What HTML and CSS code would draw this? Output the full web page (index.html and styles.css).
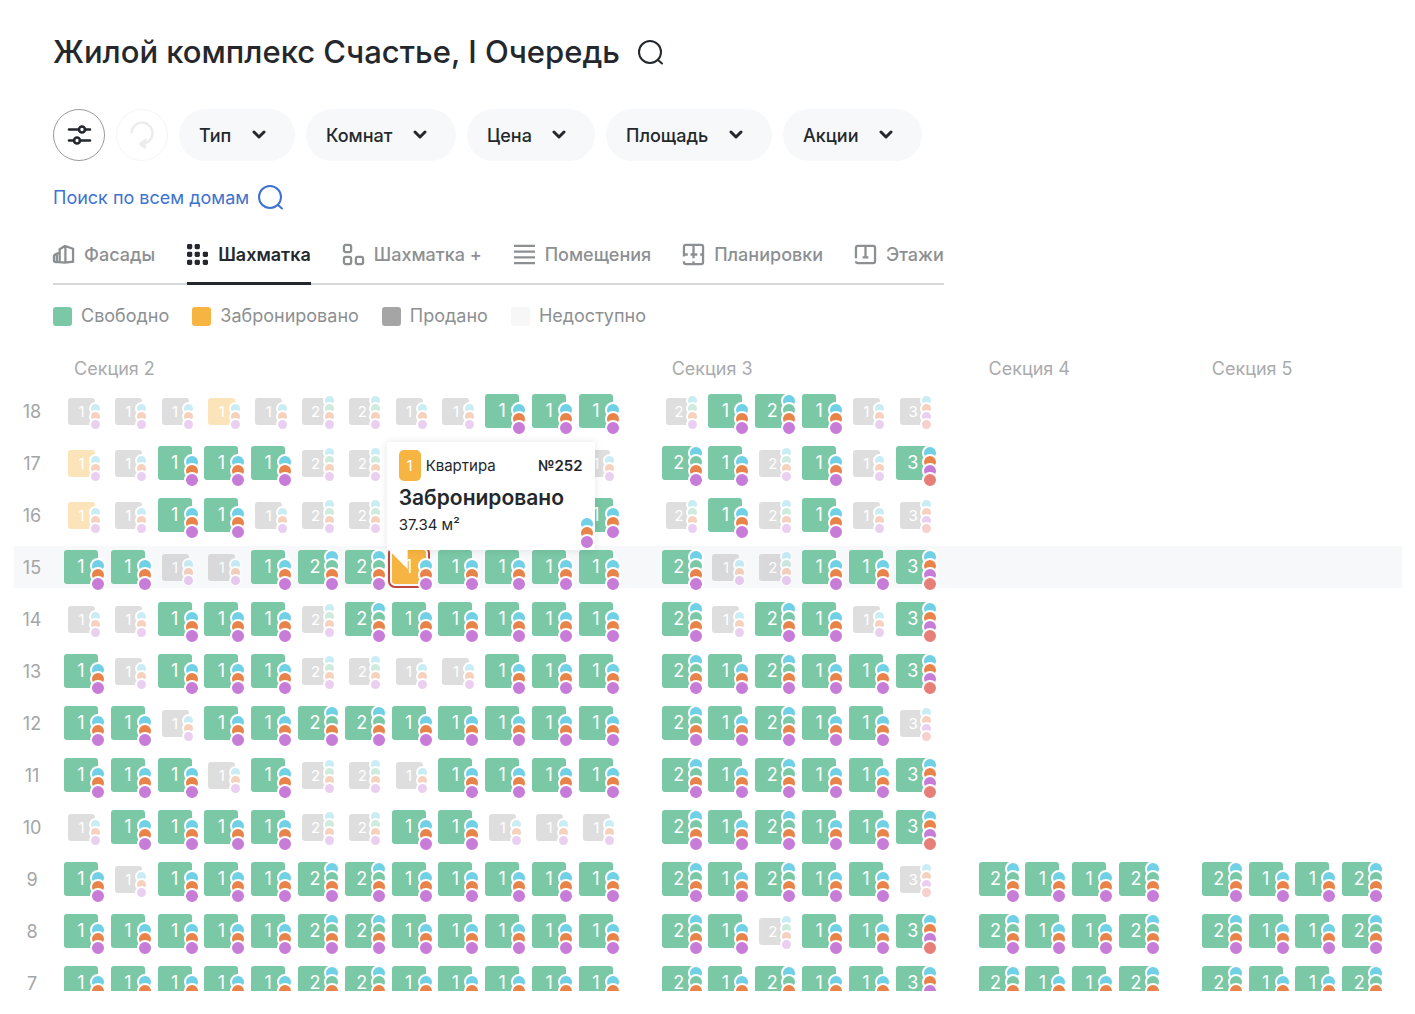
FILE: index.html
```html
<!DOCTYPE html>
<html lang="ru">
<head>
  <meta charset="UTF-8" />
  <meta name="viewport" content="width=device-width, initial-scale=1.0"/>
  <title>Жилой комплекс Счастье, I Очередь</title>
  <link rel="stylesheet" href="styles.css">
</head>
<body>

  <header class="top">
    <div class="title-row">
      <h1>Жилой комплекс Счастье, I Очередь</h1>
      <button class="icon-btn" aria-label="Поиск">
        <svg width="26" height="26" viewBox="0 0 26 26" fill="none" stroke="currentColor" stroke-width="2" stroke-linecap="round"><circle cx="12" cy="13" r="11"/><path d="M20 21l4 3.500"/></svg>
      </button>
    </div>

    <div class="filters">
      <button class="round-btn" aria-label="Все фильтры">
        <svg width="26" height="22" viewBox="0 0 26 22" fill="none" stroke="currentColor" stroke-width="2.600" stroke-linecap="round"><path d="M3 5.500h9.500M19 5.500h5M3 16.500h5M14 16.500h10"/><circle cx="16" cy="5.500" r="3"/><circle cx="11" cy="16.500" r="3"/></svg>
      </button>
      <button class="round-btn reset" aria-label="Сбросить" disabled>
        <svg width="26" height="30" viewBox="0 0 26 30" fill="none" stroke="currentColor" stroke-width="2.500"><path d="M2.500 13.500a10.500 10.500 0 1 1 14 9.500"/><path d="M17 18.500l-7 5.500 6 4.500z" fill="currentColor" stroke-width="1"/></svg>
      </button>
      <label class="filter">
        <select aria-label="Тип"><option>Тип</option></select>
        <svg width="14" height="10" viewBox="0 0 14 10"><path d="M2 2l5 5 5-5"/></svg>
      </label>
      <label class="filter">
        <select aria-label="Комнат"><option>Комнат</option></select>
        <svg width="14" height="10" viewBox="0 0 14 10"><path d="M2 2l5 5 5-5"/></svg>
      </label>
      <label class="filter">
        <select aria-label="Цена"><option>Цена</option></select>
        <svg width="14" height="10" viewBox="0 0 14 10"><path d="M2 2l5 5 5-5"/></svg>
      </label>
      <label class="filter">
        <select aria-label="Площадь"><option>Площадь</option></select>
        <svg width="14" height="10" viewBox="0 0 14 10"><path d="M2 2l5 5 5-5"/></svg>
      </label>
      <label class="filter">
        <select aria-label="Акции"><option>Акции</option></select>
        <svg width="14" height="10" viewBox="0 0 14 10"><path d="M2 2l5 5 5-5"/></svg>
      </label>
    </div>

    <a class="search-all" href="#">Поиск по всем домам
      <svg width="26" height="26" viewBox="0 0 26 26" fill="none" stroke="currentColor" stroke-width="2" stroke-linecap="round"><circle cx="12" cy="13" r="11"/><path d="M20 21l4 3.500"/></svg>
    </a>

    <nav class="tabs">
      <a href="#">
        <svg viewBox="0 0 22 22"><path d="M7 19V5.500l5.500-3.500L21 5v13.500l-8.500 1zM13 2v17.500M7 9L3 10.500Q1 11.500 1 13v4q0 2 2 2h4M4 11v8"/></svg>
        Фасады
      </a>
      <a href="#" class="active">
        <svg viewBox="0 0 22 22" class="solid"><rect x="0" y="0" width="5.500" height="5.500" rx="1.500"/><rect x="8" y="0" width="5.500" height="5.500" rx="1.500"/><rect x="0" y="8" width="5.500" height="5.500" rx="1.500"/><rect x="8" y="8" width="5.500" height="5.500" rx="1.500"/><rect x="16.500" y="8" width="5.500" height="5.500" rx="1.500"/><rect x="0" y="16.500" width="5.500" height="5.500" rx="1.500"/><rect x="8" y="16.500" width="5.500" height="5.500" rx="1.500"/><rect x="16.500" y="16.500" width="5.500" height="5.500" rx="1.500"/></svg>
        Шахматка
      </a>
      <a href="#">
        <svg viewBox="0 0 22 22"><rect x="1" y="1" width="7.500" height="7.500" rx="2"/><rect x="1" y="13.500" width="7.500" height="7.500" rx="2"/><rect x="13.500" y="13.500" width="7.500" height="7.500" rx="2"/></svg>
        Шахматка +
      </a>
      <a href="#">
        <svg viewBox="0 0 22 22"><path d="M0 2h22M0 8h22M0 14h22M0 20h22"/></svg>
        Помещения
      </a>
      <a href="#">
        <svg viewBox="0 0 22 22"><path d="M1 13V3q0-2 2-2h16q2 0 2 2v16q0 2-2 2H3q-2 0-2-2v-1M1 11h4M8 11h7M18 11h3M11 1v14M11 18v3"/></svg>
        Планировки
      </a>
      <a href="#">
        <svg viewBox="0 0 22 22"><path d="M1 15V4q0-2 2-2h16q2 0 2 2v14q0 2-2 2H3q-2 0-2-2M11 2v12M8 14h6"/></svg>
        Этажи
      </a>
    </nav>

    <ul class="legend">
      <li><i class="free"></i>Свободно</li>
      <li><i class="booked"></i>Забронировано</li>
      <li><i class="sold"></i>Продано</li>
      <li><i class="closed"></i>Недоступно</li>
    </ul>
  </header>

  <main class="board">
    <div class="floor heads">
      <span class="floor-num"></span>
      <div class="sections">
        <h2>Секция 2</h2>
        <h2>Секция 3</h2>
        <h2>Секция 4</h2>
        <h2>Секция 5</h2>
      </div>
    </div>
    <div class="floors" id="floors"></div>
  </main>

  <template id="tooltip">
    <div class="tooltip">
      <div class="tooltip-head">
        <span class="rooms">1</span>
        <span>Квартира</span>
        <b>№252</b>
      </div>
      <strong>Забронировано</strong>
      <span>37.34 м²</span>
      <span class="dots"><i class="blue"></i><i class="orange"></i><i class="purple"></i></span>
    </div>
  </template>

  <script src="board.js"></script>
</body>
</html>
```
FILE: styles.css
```css
:root {
  --text: #24282c;
  --muted: #8d9092;
  --pill: #f6f8fa;
  --free: #7ac8a6;
  --booked: #f6b443;
  --sold: #a5a5a5;
}

* {
  box-sizing: border-box;
}

body {
  margin: 0;
  font-family: Inter, "Noto Sans", sans-serif;
  font-size: 18px;
  background: #fff;
  color: var(--text);
}

button,
select {
  font: inherit;
  color: inherit;
  border: none;
  background: none;
  padding: 0;
  cursor: pointer;
}

svg {
  flex: none;
}

.top {
  display: flex;
  flex-direction: column;
  align-items: flex-start;
  padding: 32px 53px 0;
}

.title-row {
  display: flex;
  align-items: center;
  gap: 18px;
}

h1 {
  margin: 0;
  font-size: 31px;
  line-height: 40px;
  font-weight: 500;
}

.icon-btn {
  display: flex;
}

.filters {
  display: flex;
  align-items: center;
  gap: 11px;
  margin-top: 37px;
}

.round-btn {
  display: flex;
  align-items: center;
  justify-content: center;
  width: 52px;
  height: 52px;
  border: 1px solid #9b9b9b;
  border-radius: 50%;
}

.round-btn.reset {
  color: #ececec;
  border-color: #f5f5f5;
}

.filter {
  position: relative;
}

.filter select {
  appearance: none;
  height: 52px;
  padding: 0 63px 0 20px;
  border-radius: 26px;
  background: var(--pill);
  font-weight: 500;
}

.filter svg {
  position: absolute;
  right: 29px;
  top: 21px;
  fill: none;
  stroke: currentColor;
  stroke-width: 3;
  stroke-linecap: round;
  stroke-linejoin: round;
  pointer-events: none;
}

.search-all {
  display: flex;
  align-items: center;
  gap: 9px;
  margin-top: 23px;
  color: #3f72d0;
  text-decoration: none;
}

.tabs {
  display: flex;
  gap: 32px;
  margin-top: 22px;
  border-bottom: 2px solid #d5d7d8;
}

.tabs a {
  display: flex;
  align-items: center;
  gap: 10px;
  height: 53px;
  padding-bottom: 9px;
  margin-bottom: -2px;
  color: var(--muted);
  font-weight: 500;
  text-decoration: none;
  white-space: nowrap;
}

.tabs a.active {
  color: var(--text);
  font-weight: 600;
  border-bottom: 3px solid var(--text);
  padding-bottom: 6px;
}

.tabs svg {
  width: 21px;
  height: 21px;
  overflow: visible;
  fill: none;
  stroke: currentColor;
  stroke-width: 2.400;
}

.tabs svg.solid {
  fill: currentColor;
  stroke: none;
}

.legend {
  display: flex;
  gap: 23px;
  margin: 19px 0 0;
  padding: 0;
  list-style: none;
  line-height: 24px;
  color: var(--muted);
}

.legend li {
  display: flex;
  align-items: center;
  gap: 9px;
}

.legend i {
  width: 19px;
  height: 19px;
  border-radius: 3px;
}

.legend .free { background: var(--free); }
.legend .booked { background: var(--booked); }
.legend .sold { background: var(--sold); }
.legend .closed { background: #f7f7f7; }

/* floors and flats */

.board {
  padding: 28px 13px 0 14px;
}

.floor {
  display: flex;
  align-items: center;
  height: 42px;
}

.floor.heads {
  height: 24px;
}

.floor.current {
  background: #f7f8fa;
}

.floor-num {
  width: 36px;
  text-align: center;
  color: #a3a5a7;
}

.sections {
  flex: 1;
  display: grid;
  grid-template-columns: 12fr 6fr 4fr 4fr;
  column-gap: 36px;
  padding: 0 13px 0 14px;
}

h2 {
  margin: 0;
  padding-left: 10px;
  font-size: 18px;
  font-weight: 400;
  color: #a9abad;
}

.floors {
  display: flex;
  flex-direction: column;
  gap: 10px;
  height: 601px;
  margin-top: 10px;
  overflow: hidden;
}

.floors .floor {
  flex: none;
}

.section {
  display: grid;
  grid-auto-flow: column;
  grid-auto-columns: 1fr;
}

.slot {
  position: relative;
  display: flex;
  align-items: center;
  height: 34px;
}

.flat {
  --dot: 16px;
  position: relative;
  width: 34px;
  height: 34px;
  border-radius: 3px;
  background: var(--free);
  color: #fff;
  line-height: 34px;
}

.flat.sold,
.flat.booked {
  --dot: 13px;
  width: 27px;
  height: 27px;
  margin-left: 4px;
  background: var(--sold);
  font-size: 15px;
  line-height: 27px;
  opacity: 0.36;
}

.flat.booked {
  background: var(--booked);
}

.flat.selected {
  background: var(--booked);
  outline: 2px solid #c4463a;
  outline-offset: 2px;
}

.dots {
  position: absolute;
  right: calc(var(--dot) / -2);
  bottom: calc(var(--dot) / -2);
  display: flex;
  flex-direction: column;
}

.dots i {
  width: var(--dot);
  height: var(--dot);
  border: 2px solid #fff;
  border-radius: 50%;
}

.dots i + i {
  margin-top: -7px;
}

.sold .dots i + i,
.booked .dots i + i {
  margin-top: -5px;
}

.dots .blue { background: #6fd0e6; }
.dots .green { background: var(--free); }
.dots .orange { background: #e8834a; }
.dots .purple { background: #c77cd8; }
.dots .red { background: #e67f78; }

/* flat card */

.tooltip {
  --dot: 16px;
  position: absolute;
  left: -5px;
  bottom: 34px;
  z-index: 2;
  display: flex;
  flex-direction: column;
  width: 208px;
  padding: 8px 12px 14px;
  background: #fff;
  box-shadow: 0 0 8px rgba(0, 0, 0, 0.1);
  font-size: 15px;
  line-height: 22px;
}

.tooltip::after {
  content: "";
  position: absolute;
  left: 2px;
  top: 100%;
  width: 19px;
  height: 19px;
  background: #fff;
  clip-path: polygon(0 0, 100% 0, 100% 100%);
}

.tooltip-head {
  display: flex;
  align-items: center;
  gap: 5px;
}

.tooltip-head b {
  margin-left: auto;
  font-weight: 600;
}

.rooms {
  width: 22px;
  border-radius: 5px;
  background: var(--booked);
  color: #fff;
  line-height: 31px;
  text-align: center;
}

.tooltip strong {
  font-size: 21px;
  line-height: 33px;
  font-weight: 600;
}

.tooltip .dots {
  right: 0;
  bottom: 0;
}
```
FILE: board.js
```js
// rooms per column in every section
const sections = ['111112211111', '212113', '2112', '2112'];

// f - free, s - sold, b - booked, x - selected
const floors = {
  18: ['sssbsssssfff', 'sfffss'],
  17: ['bsfffsssssss', 'ffsfsf'],
  16: ['bsffssssssff', 'sfsfss'],
  15: ['ffssfffxffff', 'fssfff'],
  14: ['ssfffsffffff', 'fsffsf'],
  13: ['fsfffssssfff', 'ffffff'],
  12: ['ffsfffffffff', 'fffffs'],
  11: ['fffsfsssffff', 'ffffff'],
  10: ['sffffssffsss', 'ffffff'],
  9: ['fsffffffffff', 'fffffs', 'ffff', 'ffff'],
  8: ['ffffffffffff', 'ffsfff', 'ffff', 'ffff'],
  7: ['ffffffffffff', 'ffffff', 'ffff', 'ffff'],
};

const states = { f: 'free', s: 'sold', b: 'booked', x: 'selected' };

const dots = {
  1: ['blue', 'orange', 'purple'],
  2: ['blue', 'green', 'orange', 'purple'],
  3: ['blue', 'orange', 'purple', 'red'],
};

function flat(state, rooms) {
  const marks = dots[rooms].map(c => `<i class="${c}"></i>`).join('');
  const tip = state === 'x' ? document.getElementById('tooltip').innerHTML : '';
  return `<div class="slot"><button class="flat ${states[state]}">${rooms}<span class="dots">${marks}</span></button>${tip}</div>`;
}

function section(row, i) {
  return `<div class="section">${[...row].map((s, n) => flat(s, sections[i][n])).join('')}</div>`;
}

document.getElementById('floors').innerHTML = Object.keys(floors)
  .sort((a, b) => b - a)
  .map(num => `<div class="floor${num === '15' ? ' current' : ''}">
    <span class="floor-num">${num}</span>
    <div class="sections">${floors[num].map(section).join('')}</div>
  </div>`)
  .join('');
```
